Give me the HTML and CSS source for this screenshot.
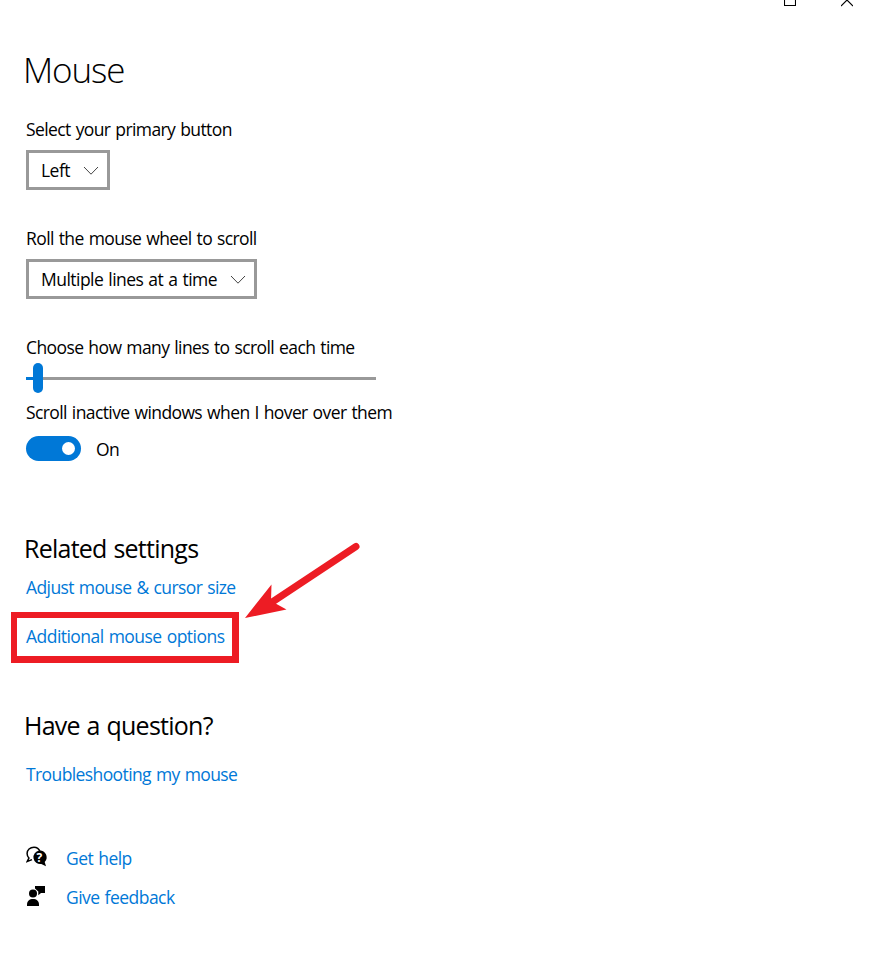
FILE: index.html
```html
<!DOCTYPE html>
<html lang="en">
<head>
  <meta charset="UTF-8">
  <meta name="viewport" content="width=device-width, initial-scale=1.0">
  <title>Mouse settings</title>
  <link rel="stylesheet" href="styles.css">
</head>
<body>

  <header class="titlebar">
    <svg class="window-btn" width="12" height="7" viewBox="0 0 12 7"><path d="M.5 0V5.5H11.5V0" /></svg>
    <svg class="window-btn" width="12" height="7" viewBox="0 0 12 7"><path d="M0 6L6 0L12 6" /></svg>
  </header>

  <main class="settings">
    <h1>Mouse</h1>

    <section class="field">
      <p class="label">Select your primary button</p>
      <button class="select">
        <span class="left-value">Left</span>
        <svg class="chevron" width="16" height="10" viewBox="0 0 16 10"><path d="M1 1L8 8.2L15 1" /></svg>
      </button>
    </section>

    <section class="field">
      <p class="label">Roll the mouse wheel to scroll</p>
      <button class="select select-wide">
        <span class="lines-value">Multiple lines at a time</span>
        <svg class="chevron" width="16" height="10" viewBox="0 0 16 10"><path d="M1 1L8 8.2L15 1" /></svg>
      </button>
    </section>

    <section class="slider-field">
      <p class="label">Choose how many lines to scroll each time</p>
      <div class="slider">
        <span class="slider-fill"></span>
        <span class="slider-thumb"></span>
        <span class="slider-track"></span>
      </div>
    </section>

    <section class="toggle-field">
      <p class="label">Scroll inactive windows when I hover over them</p>
      <div class="toggle-row">
        <span class="toggle"><span class="toggle-knob"></span></span>
        <span class="on-value">On</span>
      </div>
    </section>

    <section class="related">
      <h2 class="related-title">Related settings</h2>
      <a class="adjust-link" href="#">Adjust mouse &amp; cursor size</a>
      <div class="highlight">
        <a class="options-link" href="#">Additional mouse options</a>
        <svg class="arrow" width="120" height="80" viewBox="0 0 120 80">
          <path class="arrow-line" d="M114 6.5L28 63.5" />
          <path class="arrow-head" d="M3 78L29.5 44.5L29 61L44.5 69.5Z" />
        </svg>
      </div>
    </section>

    <section class="question">
      <h2 class="question-title">Have a question?</h2>
      <a class="trouble-link" href="#">Troubleshooting my mouse</a>
    </section>

    <footer class="support">
      <div class="support-row">
        <svg class="support-icon" width="22" height="22" viewBox="0 0 22 22">
          <path class="bubble-line" d="M14 5.5C13 2.7 10.7 1.2 8 1.2C4 1.2 1.1 3.9 1.1 7.5C1.1 9.4 1.8 10.9 2.9 12.1L1.3 15.4L6 13.6" />
          <path d="M13.2 4.5A6.8 6.8 0 1 0 15.3 18L20 20.2L18.7 16A6.8 6.8 0 0 0 13.2 4.5Z" />
          <text x="13.2" y="15.8">?</text>
        </svg>
        <a class="help-link" href="#">Get help</a>
      </div>
      <div class="support-row">
        <svg class="support-icon" width="22" height="22" viewBox="0 0 22 22">
          <circle cx="7" cy="8.5" r="4" />
          <path d="M1 21V19.5C1 16 3.5 14 7 14S13 16 13 19.5V21Z" />
          <path d="M9 1H19V8H15L12.3 10.3V6.5L9 3.5Z" />
        </svg>
        <a class="feedback-link" href="#">Give feedback</a>
      </div>
    </footer>
  </main>

</body>
</html>
```
FILE: styles.css
```css
* {
  box-sizing: border-box;
}

body {
  margin: 0;
  height: 972px;
  background: #ffffff;
  color: #000000;
  font-family: 'Open Sans', 'Noto Sans', sans-serif;
  font-size: 17.5px;
  line-height: 24px;
  letter-spacing: -0.6px;
  word-spacing: 1px;
  overflow: hidden;
}

h1, h2, p {
  margin: 0;
}

a {
  color: #0078d7;
  text-decoration: none;
  white-space: nowrap;
}

.titlebar {
  display: flex;
  justify-content: flex-end;
  gap: 45px;
  height: 45px;
  padding-right: 20px;
}

.window-btn {
  fill: none;
  stroke: #000000;
  stroke-width: 1.1;
}

.settings {
  padding-left: 26px;
}

h1 {
  margin: 0 0 24px -3px;
  padding-top: 2px;
  font-size: 35px;
  font-weight: 300;
  line-height: 46px;
  letter-spacing: -1.1px;
}

.field {
  height: 109px;
}

.label {
  white-space: nowrap;
}

.select {
  display: flex;
  align-items: center;
  justify-content: space-between;
  width: 84px;
  height: 40px;
  margin-top: 9px;
  padding: 0 8px 0 12px;
  border: 3px solid #999999;
  background: #ffffff;
  color: #000000;
  font: inherit;
  letter-spacing: -0.53px;
  word-spacing: 1px;
  white-space: nowrap;
}

.select-wide {
  width: 231px;
}

.chevron {
  flex: none;
  margin-top: 1px;
  fill: none;
  stroke: #444444;
  stroke-width: 1;
}

.slider-field {
  height: 65px;
}

.slider {
  display: flex;
  align-items: center;
  width: 350px;
  height: 30px;
  margin-top: 4px;
}

.slider-fill {
  width: 7px;
  height: 3px;
  background: #0078d7;
}

.slider-thumb {
  width: 10px;
  height: 30px;
  border-radius: 5px;
  background: #0078d7;
}

.slider-track {
  flex: 1;
  height: 3px;
  background: #999999;
}

.toggle-row {
  display: flex;
  align-items: center;
  gap: 15px;
  height: 25px;
  margin-top: 12px;
}

.toggle {
  display: flex;
  align-items: center;
  justify-content: flex-end;
  width: 55px;
  height: 25px;
  padding-right: 6px;
  border-radius: 13px;
  background: #0078d7;
}

.toggle-knob {
  width: 13px;
  height: 13px;
  border-radius: 50%;
  background: #ffffff;
}

h2 {
  margin-left: -2px;
  font-size: 25px;
  font-weight: 400;
  line-height: 32px;
  letter-spacing: -0.75px;
}

.related {
  display: flex;
  flex-direction: column;
  align-items: flex-start;
  margin-top: 71px;
}

.adjust-link {
  margin-top: 11px;
}

/* red callout around the link */
.highlight {
  position: relative;
  width: 228px;
  height: 51px;
  margin: 13px 0 0 -15px;
  padding: 6px 0 0 9px;
  border: 7px solid #ed1c24;
  border-width: 6px 7px 7px 6px;
}

.options-link {
  letter-spacing: -0.53px;
}

.arrow {
  position: absolute;
  left: 225px;
  top: -78px;
}

.arrow-line {
  stroke: #ed1c24;
  stroke-width: 7;
  stroke-linecap: round;
}

.arrow-head {
  fill: #ed1c24;
}

.question {
  margin-top: 46px;
}

.trouble-link {
  display: block;
  margin-top: 21px;
}

.support {
  margin-top: 60px;
}

.support-row {
  display: flex;
  gap: 18px;
  height: 39px;
  letter-spacing: -0.53px;
}

.support-icon text {
  fill: #ffffff;
  font-size: 12px;
  font-weight: 700;
  text-anchor: middle;
}

.bubble-line {
  fill: none;
  stroke: #000000;
  stroke-width: 1.5;
}
```
